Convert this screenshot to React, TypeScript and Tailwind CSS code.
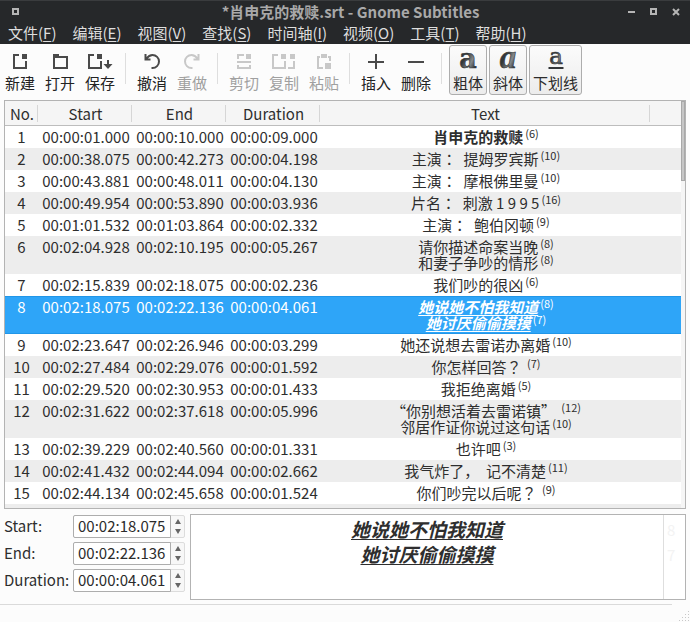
import type { ReactNode } from "react";

const menus: [string, string][] = [
  ["文件", "F"],
  ["编辑", "E"],
  ["视图", "V"],
  ["查找", "S"],
  ["时间轴", "I"],
  ["视频", "O"],
  ["工具", "T"],
  ["帮助", "H"],
];

type Line = [text: string, count: number];
type Row = { no: number; start: string; end: string; duration: string; lines: Line[]; style?: string; selected?: boolean };

const rows: Row[] = [
  { no: 1, start: "00:00:01.000", end: "00:00:10.000", duration: "00:00:09.000", lines: [["肖申克的救赎", 6]], style: "font-bold" },
  { no: 2, start: "00:00:38.075", end: "00:00:42.273", duration: "00:00:04.198", lines: [["主演：  提姆罗宾斯", 10]] },
  { no: 3, start: "00:00:43.881", end: "00:00:48.011", duration: "00:00:04.130", lines: [["主演：  摩根佛里曼", 10]] },
  { no: 4, start: "00:00:49.954", end: "00:00:53.890", duration: "00:00:03.936", lines: [["片名：  刺激 1 9 9 5", 16]] },
  { no: 5, start: "00:01:01.532", end: "00:01:03.864", duration: "00:00:02.332", lines: [["主演：  鲍伯冈顿", 9]] },
  { no: 6, start: "00:02:04.928", end: "00:02:10.195", duration: "00:00:05.267", lines: [["请你描述命案当晚", 8], ["和妻子争吵的情形", 8]] },
  { no: 7, start: "00:02:15.839", end: "00:02:18.075", duration: "00:00:02.236", lines: [["我们吵的很凶", 6]] },
  {
    no: 8, start: "00:02:18.075", end: "00:02:22.136", duration: "00:00:04.061",
    lines: [["她说她不怕我知道", 8], ["她讨厌偷偷摸摸", 7]],
    style: "font-bold italic underline decoration-1 underline-offset-2 [text-decoration-skip-ink:none]",
    selected: true,
  },
  { no: 9, start: "00:02:23.647", end: "00:02:26.946", duration: "00:00:03.299", lines: [["她还说想去雷诺办离婚", 10]] },
  { no: 10, start: "00:02:27.484", end: "00:02:29.076", duration: "00:00:01.592", lines: [["你怎样回答？ ", 7]] },
  { no: 11, start: "00:02:29.520", end: "00:02:30.953", duration: "00:00:01.433", lines: [["我拒绝离婚", 5]] },
  { no: 12, start: "00:02:31.622", end: "00:02:37.618", duration: "00:00:05.996", lines: [["“你别想活着去雷诺镇” ", 12], ["邻居作证你说过这句话", 10]] },
  { no: 13, start: "00:02:39.229", end: "00:02:40.560", duration: "00:00:01.331", lines: [["也许吧", 3]] },
  { no: 14, start: "00:02:41.432", end: "00:02:44.094", duration: "00:00:02.662", lines: [["我气炸了，  记不清楚", 11]] },
  { no: 15, start: "00:02:44.134", end: "00:02:45.658", duration: "00:00:01.524", lines: [["你们吵完以后呢？ ", 9]] },
];

// Colons and question marks sit in the middle of their square.
function Subtitle({ text }: { text: string }) {
  return text.split(/([：？])/).map((part, i) =>
    i % 2 ? (
      <span key={i} lang="ja" className="font-['Noto_Sans_CJK_JP',sans-serif]">
        {part}
      </span>
    ) : (
      part
    ),
  );
}

function Icon({ width = 16, children }: { width?: number; children: ReactNode }) {
  return (
    <svg width={width} height="18" viewBox={`0 0 ${width} 18`} fill="none" stroke="currentColor" strokeWidth="2" aria-hidden="true">
      {children}
    </svg>
  );
}

const arc = "M1.500 2v5.500h5M2 7C4 4.500 5.500 3 8.500 3a6.500 6.500 0 0 1 0 13H7.500";

const icons = {
  create: (
    <Icon>
      <path d="M7 3H2v13h12V9" />
      <path d="M10 2h5v5h-5z" fill="currentColor" stroke="none" />
    </Icon>
  ),
  open: (
    <Icon>
      <path d="M2 5h13v11H2z" />
      <path d="M1 2h6v3H1z" fill="currentColor" stroke="none" />
    </Icon>
  ),
  save: (
    <Icon width={26}>
      <path d="M7 3H2v13h12V9" />
      <path d="M10 2h5v5h-5z" fill="currentColor" stroke="none" />
      <path d="M21 8v6" />
      <path d="M16.500 12h9L21 17z" fill="currentColor" stroke="none" />
    </Icon>
  ),
  undo: (
    <Icon>
      <path d={arc} />
    </Icon>
  ),
  redo: (
    <Icon>
      <path d={arc} transform="matrix(-1 0 0 1 16 0)" />
    </Icon>
  ),
  cut: (
    <Icon>
      <path d="M2 7V3h6M1 10h14M2 13v3h12v-3" />
      <path d="M10 2h5v5h-5z" fill="currentColor" stroke="none" />
    </Icon>
  ),
  copy: (
    <Icon width={24}>
      <path d="M6 3H1v13h12V9M16 16h6V9" />
      <path d="M9 2h5v5H9zM18 2h5v5h-5z" fill="currentColor" stroke="none" />
    </Icon>
  ),
  paste: (
    <Icon>
      <path d="M4 5H2v11h5M12 5h2v4" />
      <path d="M5 2h6v4H5zM9 11h6v6H9z" fill="currentColor" stroke="none" />
    </Icon>
  ),
  insert: (
    <Icon>
      <path d="M8 2v15M0 10h16" />
    </Icon>
  ),
  remove: (
    <Icon>
      <path d="M0 10h16" />
    </Icon>
  ),
};

function Glyph({ kind }: { kind: "bold" | "italic" | "underline" }) {
  const fill = `url(#metal-${kind})`;
  return (
    <svg width="22" height="24" viewBox="0 0 22 24" aria-hidden="true" className="overflow-visible" stroke="#333638" strokeWidth="0.6">
      <defs>
        <linearGradient id={`metal-${kind}`} x1="0" y1="0" x2="1" y2="1">
          <stop offset="0.4" stopColor="#34383a" />
          <stop offset="0.65" stopColor="#85898b" />
          <stop offset="0.85" stopColor="#2d3032" />
        </linearGradient>
      </defs>
      {kind === "bold" && (
        <text x="11" y="22" textAnchor="middle" fill={fill} className="font-['DejaVu_Serif',serif] text-[27px] font-bold">a</text>
      )}
      {kind === "italic" && (
        <text x="11" y="22" textAnchor="middle" fill={fill} className="font-['Liberation_Serif',serif] text-[33px] font-bold italic">a</text>
      )}
      {kind === "underline" && (
        <>
          <text x="11" y="18" textAnchor="middle" fill={fill} className="font-['DejaVu_Serif',serif] text-[23px]">a</text>
          <path d="M3.500 22h15" strokeWidth="2" />
        </>
      )}
    </svg>
  );
}

function Tool({ icon, label, disabled }: { icon: ReactNode; label: string; disabled?: boolean }) {
  return (
    <button
      disabled={disabled}
      className="flex w-10 flex-col items-center pt-[7px] text-[#4a4a4a] disabled:text-[#c8c8c8]"
    >
      {icon}
      <span className={disabled ? "mt-0.5 leading-[22px] text-[#a0a0a0]" : "mt-0.5 leading-[22px] text-[#222]"}>{label}</span>
    </button>
  );
}

function Toggle({ kind, label }: { kind: "bold" | "italic" | "underline"; label: string }) {
  return (
    <button
      aria-pressed="true"
      className="mx-px flex h-[50px] flex-col items-center rounded-[3px] border border-[#adadad] bg-linear-to-b from-[#fbfbfb] to-[#ececec] px-[3px] text-[#2b2b2b]"
    >
      <Glyph kind={kind} />
      <span className="mt-0.5 leading-[22px]">{label}</span>
    </button>
  );
}

function Separator() {
  return <div className="mt-2 ml-[5px] mr-1.5 h-[31px] w-px bg-[#dedede]" />;
}

function TimeField({ id, label, value }: { id: string; label: string; value: string }) {
  return (
    <>
      <label htmlFor={id}>{label}</label>
      <div className="flex h-[23px] w-28 rounded-[2px] border border-[#dcdcdc] bg-[#f7f7f7]">
        <input
          id={id}
          defaultValue={value}
          className="-my-px -ml-px w-[98px] rounded-l-[2px] border border-[#adadad] bg-white pl-1 text-[#2b2b2b] outline-none"
        />
        <div className="flex flex-1 flex-col items-center justify-center gap-[5px]">
          <button aria-label="+" className="border-x-3 border-b-5 border-x-transparent border-b-[#666]" />
          <button aria-label="-" className="border-x-3 border-t-5 border-x-transparent border-t-[#666]" />
        </div>
      </div>
    </>
  );
}

export default function App() {
  return (
    <div className="flex h-screen flex-col overflow-hidden bg-[#fcfcfc] font-['Noto_Sans_CJK_SC',sans-serif] text-[15px] text-[#2e2e2e]">
      <header className="border-t border-[#3a3c3e] bg-[#26282a]">
        <div className="flex h-[21px] items-center pr-2.5 pl-3 text-[#a9a9a9]">
          <button aria-label="Menu" className="size-[7px] border-2 border-[#b5b5b5]" />
          <h1 className="flex-1 pl-[54px] text-center font-bold leading-[21px]">*肖申克的救赎.srt - Gnome Subtitles</h1>
          <div className="flex items-center gap-[15px]">
            <button aria-label="Minimize" className="h-0.5 w-[7px] bg-[#b5b5b5]" />
            <button aria-label="Maximize" className="size-[7px] border-2 border-[#b5b5b5]" />
            <button aria-label="Close">
              <svg width="8" height="8" viewBox="0 0 8 8" stroke="#b5b5b5" strokeWidth="2" aria-hidden="true">
                <path d="M1 1l6 6M7 1l-6 6" />
              </svg>
            </button>
          </div>
        </div>
        <nav className="flex h-[22px] gap-4 pl-2 text-[#dedede]">
          {menus.map(([name, key]) => (
            <button key={key} className="leading-[22px]">
              {name}(<span className="underline underline-offset-2">{key}</span>)
            </button>
          ))}
        </nav>
      </header>

      <div className="flex h-14 shrink-0 items-start pt-px">
        <Tool icon={icons.create} label="新建" />
        <Tool icon={icons.open} label="打开" />
        <Tool icon={icons.save} label="保存" />
        <Separator />
        <Tool icon={icons.undo} label="撤消" />
        <Tool icon={icons.redo} label="重做" disabled />
        <Separator />
        <Tool icon={icons.cut} label="剪切" disabled />
        <Tool icon={icons.copy} label="复制" disabled />
        <Tool icon={icons.paste} label="粘贴" disabled />
        <Separator />
        <Tool icon={icons.insert} label="插入" />
        <Tool icon={icons.remove} label="删除" />
        <Separator />
        <Toggle kind="bold" label="粗体" />
        <Toggle kind="italic" label="斜体" />
        <Toggle kind="underline" label="下划线" />
      </div>

      <main className="mx-1 flex min-h-0 flex-1 border border-[#b3b3b3] bg-white">
        <div className="min-w-0 flex-1 overflow-hidden">
          <table className="w-full table-fixed border-separate border-spacing-0">
            <colgroup>
              <col className="w-[33px]" />
              <col className="w-[94px]" />
              <col className="w-[94px]" />
              <col className="w-[94px]" />
              <col />
              <col className="w-[31px]" />
            </colgroup>
            <thead>
              <tr>
                {["No.", "Start", "End", "Duration", "Text", ""].map((title, i) => (
                  <th key={i} className="h-[25px] border-b border-[#bdbdbd] bg-[#f5f5f5] p-0 font-normal">
                    <div className={i < 5 ? "h-[17px] border-r border-[#d6d6d6] pl-0.5 leading-[17px]" : "h-[17px]"}>{title}</div>
                  </th>
                ))}
              </tr>
            </thead>
            <tbody className="text-center leading-4">
              {rows.map((row) => (
                <tr
                  key={row.no}
                  className={
                    row.selected
                      ? "bg-[#2ea5f8] text-white *:border-y *:border-[#2196e8] *:py-0.5"
                      : "even:bg-[#ededed] *:py-[3px]"
                  }
                >
                  <td className="align-top">{row.no}</td>
                  <td className="pl-0.5 align-top">{row.start}</td>
                  <td className="pl-0.5 align-top">{row.end}</td>
                  <td className="pl-0.5 align-top">{row.duration}</td>
                  <td className="pl-0.5 whitespace-pre">
                    {row.lines.map(([text, count]) => (
                      <div key={text} className="h-4">
                        <span className={row.style}>
                          <Subtitle text={text} />
                        </span>
                        <sup className="-top-[5px] pl-0.5 align-baseline text-[11px] leading-none">({count})</sup>
                      </div>
                    ))}
                  </td>
                  <td />
                </tr>
              ))}
              <tr className="bg-[#ededed]">
                <td colSpan={6} className="h-[22px]" />
              </tr>
            </tbody>
          </table>
        </div>
        <div className="w-1 bg-[#f5f5f5]">
          <div className="h-20 border border-[#a8a8a8] bg-[#c6c6c6]" />
        </div>
      </main>

      <section className="mt-[5px] flex pr-1 pl-1">
        <div className="grid w-[186px] shrink-0 grid-cols-[69px_1fr] content-start items-center gap-y-1 pt-px">
          <TimeField id="start" label="Start:" value="00:02:18.075" />
          <TimeField id="end" label="End:" value="00:02:22.136" />
          <TimeField id="duration" label="Duration:" value="00:00:04.061" />
        </div>
        <div className="flex h-[86px] flex-1 border border-[#b3b3b3] bg-white">
          <textarea
            aria-label="Text"
            defaultValue={"她说她不怕我知道\n她讨厌偷偷摸摸"}
            className="min-w-0 flex-1 resize-none overflow-hidden pt-px text-center text-[19px] leading-[25px] font-bold italic underline decoration-1 underline-offset-2 outline-none [text-decoration-skip-ink:none]"
          />
          <div className="w-[22px] border-l border-[#dedede] pt-0.5 pl-[3px] leading-[25px] text-[#f3f3f3]">
            <div>8</div>
            <div>7</div>
          </div>
        </div>
      </section>

      <footer className="mt-1 flex h-[18px] shrink-0">
        <div className="flex-1 border-t border-[#dadada]" />
        <svg width="18" height="18" viewBox="0 0 18 18" fill="#c8c8c8" className="self-end" aria-hidden="true">
          {[0, 1, 2, 3].map((r) =>
            Array.from({ length: r + 1 }, (_, c) => <rect key={`${r}-${c}`} x={16 - c * 3} y={7 + r * 3} width="1" height="1" />),
          )}
        </svg>
      </footer>
    </div>
  );
}
